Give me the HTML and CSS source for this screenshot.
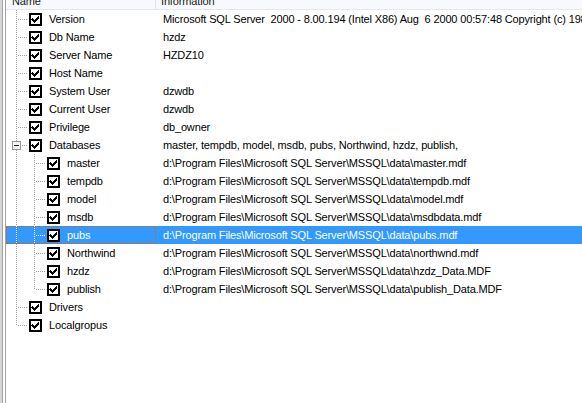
FILE: index.html
```html
<!DOCTYPE html>
<html>
<head>
<meta charset="utf-8">
<link rel="stylesheet" href="styles.css">
</head>
<body>
<div class="window">
  <div class="header">
    <div class="hcell hname">Name</div>
    <div class="hcell hinfo">Information</div>
  </div>
  <div class="rows">
    <div class="row"><div class="name"><span class="g tee"></span><span class="cb"></span><span class="label">Version</span></div><div class="info">Microsoft SQL Server  2000 - 8.00.194 (Intel X86) Aug  6 2000 00:57:48 Copyright (c) 1988-2000 Microsoft Corporation Enterprise Edition on Windows NT 5.0</div></div>
    <div class="row"><div class="name"><span class="g tee"></span><span class="cb"></span><span class="label">Db Name</span></div><div class="info">hzdz</div></div>
    <div class="row"><div class="name"><span class="g tee"></span><span class="cb"></span><span class="label">Server Name</span></div><div class="info">HZDZ10</div></div>
    <div class="row"><div class="name"><span class="g tee"></span><span class="cb"></span><span class="label">Host Name</span></div><div class="info"></div></div>
    <div class="row"><div class="name"><span class="g tee"></span><span class="cb"></span><span class="label">System User</span></div><div class="info">dzwdb</div></div>
    <div class="row"><div class="name"><span class="g tee"></span><span class="cb"></span><span class="label">Current User</span></div><div class="info">dzwdb</div></div>
    <div class="row"><div class="name"><span class="g tee"></span><span class="cb"></span><span class="label">Privilege</span></div><div class="info">db_owner</div></div>
    <div class="row"><div class="name"><span class="g tee exp"><span class="box"><svg width="9" height="9" viewBox="0 0 9 9" shape-rendering="crispEdges"><rect x="0.5" y="0.5" width="8" height="8" fill="#f4f4f4" stroke="#8e9aa8"/><rect x="2" y="4" width="5" height="1" fill="#202020"/></svg></span></span><span class="cb"></span><span class="label">Databases</span></div><div class="info">master, tempdb, model, msdb, pubs, Northwind, hzdz, publish,</div></div>
    <div class="row"><div class="name"><span class="g pipe"></span><span class="g tee"></span><span class="cb"></span><span class="label">master</span></div><div class="info">d:\Program Files\Microsoft SQL Server\MSSQL\data\master.mdf</div></div>
    <div class="row"><div class="name"><span class="g pipe"></span><span class="g tee"></span><span class="cb"></span><span class="label">tempdb</span></div><div class="info">d:\Program Files\Microsoft SQL Server\MSSQL\data\tempdb.mdf</div></div>
    <div class="row"><div class="name"><span class="g pipe"></span><span class="g tee"></span><span class="cb"></span><span class="label">model</span></div><div class="info">d:\Program Files\Microsoft SQL Server\MSSQL\data\model.mdf</div></div>
    <div class="row"><div class="name"><span class="g pipe"></span><span class="g tee"></span><span class="cb"></span><span class="label">msdb</span></div><div class="info">d:\Program Files\Microsoft SQL Server\MSSQL\data\msdbdata.mdf</div></div>
    <div class="row selected"><div class="name"><span class="g pipe"></span><span class="g tee"></span><span class="cb"></span><span class="label">pubs</span></div><div class="info">d:\Program Files\Microsoft SQL Server\MSSQL\data\pubs.mdf</div></div>
    <div class="row"><div class="name"><span class="g pipe"></span><span class="g tee"></span><span class="cb"></span><span class="label">Northwind</span></div><div class="info">d:\Program Files\Microsoft SQL Server\MSSQL\data\northwnd.mdf</div></div>
    <div class="row"><div class="name"><span class="g pipe"></span><span class="g tee"></span><span class="cb"></span><span class="label">hzdz</span></div><div class="info">d:\Program Files\Microsoft SQL Server\MSSQL\data\hzdz_Data.MDF</div></div>
    <div class="row"><div class="name"><span class="g pipe"></span><span class="g ell"></span><span class="cb"></span><span class="label">publish</span></div><div class="info">d:\Program Files\Microsoft SQL Server\MSSQL\data\publish_Data.MDF</div></div>
    <div class="row"><div class="name"><span class="g tee"></span><span class="cb"></span><span class="label">Drivers</span></div><div class="info"></div></div>
    <div class="row"><div class="name"><span class="g ell"></span><span class="cb"></span><span class="label">Localgropus</span></div><div class="info"></div></div>
  </div>
</div>
</body>
</html>
```
FILE: styles.css
```css
html, body {
  margin: 0;
  padding: 0;
  background: #fff;
}
.window {
  width: 582px;
  height: 403px;
  overflow: hidden;
  box-sizing: border-box;
  padding-left: 6px;
  background: linear-gradient(to right, #d6d6d6 0 2px, #a0a0a0 2px 3px, #ffffff 3px 5px, #a0a0a0 5px 6px, #ffffff 6px);
  font-family: "Liberation Sans", Arial, sans-serif;
  font-size: 11px;
  letter-spacing: -0.15px;
  color: #000;
}
.header {
  display: flex;
  height: 9px;
  overflow: hidden;
  background: #f7f9fc;
  border-bottom: 1px solid #e4e7eb;
}
.hcell {
  line-height: 9px;
  margin-top: -3px;
  color: #1a1a1a;
  white-space: nowrap;
}
.hname {
  width: 150px;
  box-sizing: border-box;
  padding-left: 6px;
  border-right: 1px solid #e0e3e7;
  height: 20px;
}
.hinfo {
  padding-left: 5px;
}
.rows {
  display: flex;
  flex-direction: column;
}
.row {
  display: flex;
  height: 18px;
  line-height: 18px;
  white-space: pre;
}
.name {
  width: 150px;
  flex: none;
  display: flex;
  align-items: center;
  height: 18px;
}
.info {
  padding-left: 7px;
  white-space: pre;
}
.label {
  padding-left: 7px;
}
.g {
  flex: none;
  height: 18px;
  --dot: #a0a0a0;
}
.selected .g { --dot: #ffffff; }
.tee, .ell {
  width: 23px;
}
.pipe {
  width: 18px;
}
.tee {
  background:
    repeating-linear-gradient(to bottom, var(--dot) 0 1px, transparent 1px 2px) 10px 0 / 1px 18px no-repeat,
    repeating-linear-gradient(to right, var(--dot) 0 1px, transparent 1px 2px) 12px 9px / 10px 1px no-repeat;
}
.ell {
  background:
    repeating-linear-gradient(to bottom, var(--dot) 0 1px, transparent 1px 2px) 10px 0 / 1px 10px no-repeat,
    repeating-linear-gradient(to right, var(--dot) 0 1px, transparent 1px 2px) 12px 9px / 10px 1px no-repeat;
}
.pipe {
  background:
    repeating-linear-gradient(to bottom, var(--dot) 0 1px, transparent 1px 2px) 10px 0 / 1px 18px no-repeat;
}
.exp {
  display: flex;
  align-items: center;
}
.box {
  display: block;
  margin-left: 6px;
  width: 9px;
  height: 9px;
  margin-top: 1px;
}
.box svg { display: block; }
.cb {
  flex: none;
  width: 9px;
  height: 9px;
  border: 2px solid #000;
  background: #fff url("data:image/svg+xml;utf8,<svg xmlns='http://www.w3.org/2000/svg' width='9' height='9' viewBox='0 0 9 9' shape-rendering='crispEdges'><path d='M1 3h1v1h1v1h1v-1h1v-1h1v-1h1v-1h1v3h-1v1h-1v1h-1v1h-1v1h-1v-1h-1v-1h-1v-1h-1z' fill='black'/></svg>") 0 0 / 9px 9px no-repeat;
}
.selected {
  background: #3399ff;
  color: #fff;
}
.selected .name {
  outline: 1px dotted #cc6600;
  outline-offset: -1px;
}
```
